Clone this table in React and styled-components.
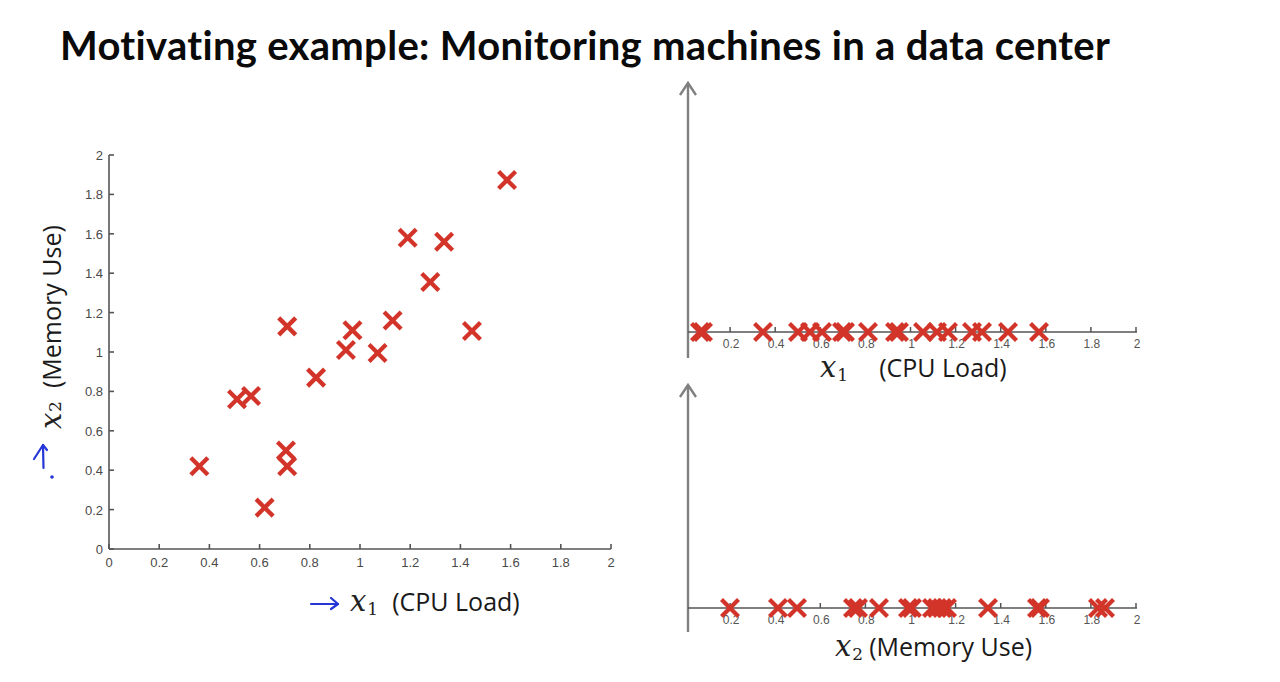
import styled, { createGlobalStyle } from "styled-components";

const Global = createGlobalStyle`
  html, body {
    margin: 0;
    padding: 0;
    background: #ffffff;
  }
`;

const Slide = styled.div`
  width: 1280px;
  height: 682px;
  overflow: hidden;
  background: #ffffff;
  box-sizing: border-box;
  padding-top: 25px;
  font-family: "Open Sans", Lato, sans-serif;
  color: #111;
`;

const Title = styled.h1`
  margin: 0 0 0 60px;
  font-family: Lato, sans-serif;
  font-weight: 700;
  font-size: 40px;
  line-height: 40px;
  letter-spacing: 0.3px;
  color: #0a0a0a;
  white-space: nowrap;
`;

const Body = styled.div`
  display: flex;
  align-items: flex-start;
  margin-top: 11px;
`;

const LeftPanel = styled.div`
  flex-shrink: 0;
  display: grid;
  grid-template-columns: 50px 560px;
  grid-template-rows: 435px auto;
  align-content: start;
  padding: 64px 0 0 20px;
  width: 640px;
`;

const YLabelCell = styled.div`
  display: flex;
  flex-direction: column;
  align-items: center;
  padding: 85px 0 0 13px;
`;

const VerticalLabel = styled.div`
  writing-mode: vertical-rl;
  transform: rotate(180deg);
  display: flex;
  align-items: baseline;
  gap: 4px;
`;

const XLabelRow = styled.div`
  grid-column: 2;
  display: flex;
  align-items: baseline;
  padding: 12px 0 0 ${(p) => p.$indent}px;
  gap: ${(p) => p.$gap}px;
`;

const MathVar = styled.span`
  font-family: "DejaVu Serif", "Liberation Serif", serif;
  font-style: italic;
  font-size: 29px;
  line-height: 1;
  color: #222;
  sub {
    font-style: normal;
    font-size: 17px;
    vertical-align: -4px;
    line-height: 1;
    margin-inline-start: 1px;
  }
`;

const AxisWords = styled.span`
  font-family: "Open Sans", Lato, sans-serif;
  font-size: 25px;
  line-height: 1;
  color: #1a1a1a;
  white-space: nowrap;
  margin-inline-start: ${(p) => p.$shift || 0}px;
`;

const RightPanel = styled.div`
  flex-shrink: 0;
  display: flex;
  flex-direction: column;
  width: 480px;
`;

const StripLabel = styled.div`
  display: flex;
  align-items: baseline;
  box-sizing: border-box;
  height: ${(p) => p.$h}px;
  padding: ${(p) => p.$top || 0}px 0 0 ${(p) => p.$indent}px;
  gap: ${(p) => p.$gap}px;
`;

const Svg = styled.svg`
  display: block;
  overflow: visible;
  text {
    font-family: "Liberation Sans", Arial, sans-serif;
  }
`;

const ArrowSvg = styled.svg`
  display: block;
  overflow: visible;
  align-self: ${(p) => p.$align || "auto"};
  margin-top: ${(p) => p.$top || 0}px;
  margin-left: ${(p) => p.$left || 0}px;
`;

const RED = "#d3342a";
const BLUE = "#2536d8";

function Cross({ x, y, s = 8.5 }) {
  return (
    <g stroke={RED} strokeWidth="4.3" strokeLinecap="butt">
      <line x1={x - s} y1={y - s} x2={x + s} y2={y + s} />
      <line x1={x - s} y1={y + s} x2={x + s} y2={y - s} />
    </g>
  );
}

const ticks = [0, 0.2, 0.4, 0.6, 0.8, 1, 1.2, 1.4, 1.6, 1.8, 2];
const fmt = (v) => String(Math.round(v * 10) / 10);

const points = [
  [0.36, 0.42], [0.51, 0.76], [0.566, 0.777], [0.62, 0.21], [0.71, 1.13],
  [0.705, 0.5], [0.71, 0.42], [0.825, 0.87], [0.944, 1.01], [0.97, 1.11],
  [1.07, 0.995], [1.13, 1.16], [1.19, 1.58], [1.28, 1.355], [1.335, 1.56],
  [1.446, 1.107], [1.586, 1.873],
];

const LX = (v) => 39 + v * 251;
const LY = (v) => 409 - v * 197;

function Scatter() {
  return (
    <Svg width="560" height="435" viewBox="0 0 560 435">
      <g stroke="#555" strokeWidth="1.6" fill="none">
        <line x1={LX(0)} y1={LY(2)} x2={LX(0)} y2={LY(0)} />
        <line x1={LX(0)} y1={LY(0)} x2={LX(2)} y2={LY(0)} />
        {ticks.map((t) => (
          <line key={"y" + t} x1={LX(0)} y1={LY(t)} x2={LX(0) + 5} y2={LY(t)} />
        ))}
        {ticks.map((t) => (
          <line key={"x" + t} x1={LX(t)} y1={LY(0)} x2={LX(t)} y2={LY(0) - 5} />
        ))}
      </g>
      <g fill="#4a4a4a" fontSize="13">
        {ticks.map((t) => (
          <text key={"yl" + t} x={LX(0) - 6} y={LY(t) + 5} textAnchor="end">
            {fmt(t)}
          </text>
        ))}
        {ticks.map((t) => (
          <text key={"xl" + t} x={LX(t)} y={LY(0) + 18} textAnchor="middle">
            {fmt(t)}
          </text>
        ))}
      </g>
      {points.map(([a, b], i) => (
        <Cross key={i} x={LX(a)} y={LY(b)} />
      ))}
    </Svg>
  );
}

const SX = (v) => 25 + v * 225.5;

function Strip({ height, axisY, lineEnd, values }) {
  return (
    <Svg width="480" height={height} viewBox={`0 0 480 ${height}`}>
      <g stroke="#808080" strokeWidth="2.4" fill="none">
        <line x1="28" y1="7" x2="28" y2={lineEnd} />
        <polyline points="20,19 28,7 36,19" />
      </g>
      <g stroke="#555" strokeWidth="1.5" fill="none">
        <line x1="28" y1={axisY} x2={SX(2) + 1} y2={axisY} />
        {ticks.slice(1).map((t) => (
          <line key={t} x1={SX(t)} y1={axisY} x2={SX(t)} y2={axisY - 5} />
        ))}
      </g>
      <g fill="#555" fontSize="12">
        {ticks.slice(1).map((t) => (
          <text key={t} x={SX(t) + 1} y={axisY + 16} textAnchor="middle">
            {fmt(t)}
          </text>
        ))}
      </g>
      {values.map((v, i) => (
        <Cross key={i} x={SX(v)} y={axisY} />
      ))}
    </Svg>
  );
}

const toVal = (px) => (px - 685) / 225.5;
const cpuStrip = [700, 703, 763, 798, 810, 822, 842, 845, 868, 895, 899, 923, 937, 948, 972, 982, 1008, 1039].map(toVal);
const memStrip = [730, 778, 797, 853, 858, 879, 908, 912, 932, 937, 942, 947, 988, 1037, 1040, 1098, 1105].map(toVal);

function UpArrow() {
  return (
    <ArrowSvg width="26" height="42" viewBox="0 0 26 42" $align="flex-start" $top={12} $left={-3}>
      <g stroke={BLUE} strokeWidth="2.2" fill="none" strokeLinecap="round" strokeLinejoin="round">
        <path d="M13 4 L13.5 27" />
        <path d="M4 18 L13 4 L17 9" />
      </g>
      <circle cx="22" cy="36" r="1.8" fill={BLUE} />
    </ArrowSvg>
  );
}

function RightArrow() {
  return (
    <ArrowSvg width="30" height="16" viewBox="0 0 30 16">
      <g stroke={BLUE} strokeWidth="2.2" fill="none" strokeLinecap="round" strokeLinejoin="round">
        <path d="M1 9 L28 9" />
        <path d="M21 3 L28 9 L21 14" />
      </g>
    </ArrowSvg>
  );
}

export default function App() {
  return (
    <>
      <Global />
      <Slide>
        <Title>Motivating example: Monitoring machines in a data center</Title>
        <Body>
          <LeftPanel>
            <YLabelCell>
              <VerticalLabel>
                <MathVar>
                  x<sub>2</sub>
                </MathVar>
                <AxisWords $shift={9}>(Memory Use)</AxisWords>
              </VerticalLabel>
              <UpArrow />
            </YLabelCell>
            <Scatter />
            <XLabelRow $indent={240} $gap={10}>
              <RightArrow />
              <MathVar>
                x<sub>1</sub>
              </MathVar>
              <AxisWords $shift={4}>(CPU Load)</AxisWords>
            </XLabelRow>
          </LeftPanel>
          <RightPanel>
            <Strip height={277} axisY={256} lineEnd={282} values={cpuStrip} />
            <StripLabel $h={25} $indent={160} $gap={31}>
              <MathVar>
                x<sub>1</sub>
              </MathVar>
              <AxisWords>(CPU Load)</AxisWords>
            </StripLabel>
            <Strip height={251} axisY={230} lineEnd={254} values={memStrip} />
            <StripLabel $h={44} $top={3} $indent={175} $gap={6}>
              <MathVar>
                x<sub>2</sub>
              </MathVar>
              <AxisWords>(Memory Use)</AxisWords>
            </StripLabel>
          </RightPanel>
        </Body>
      </Slide>
    </>
  );
}
